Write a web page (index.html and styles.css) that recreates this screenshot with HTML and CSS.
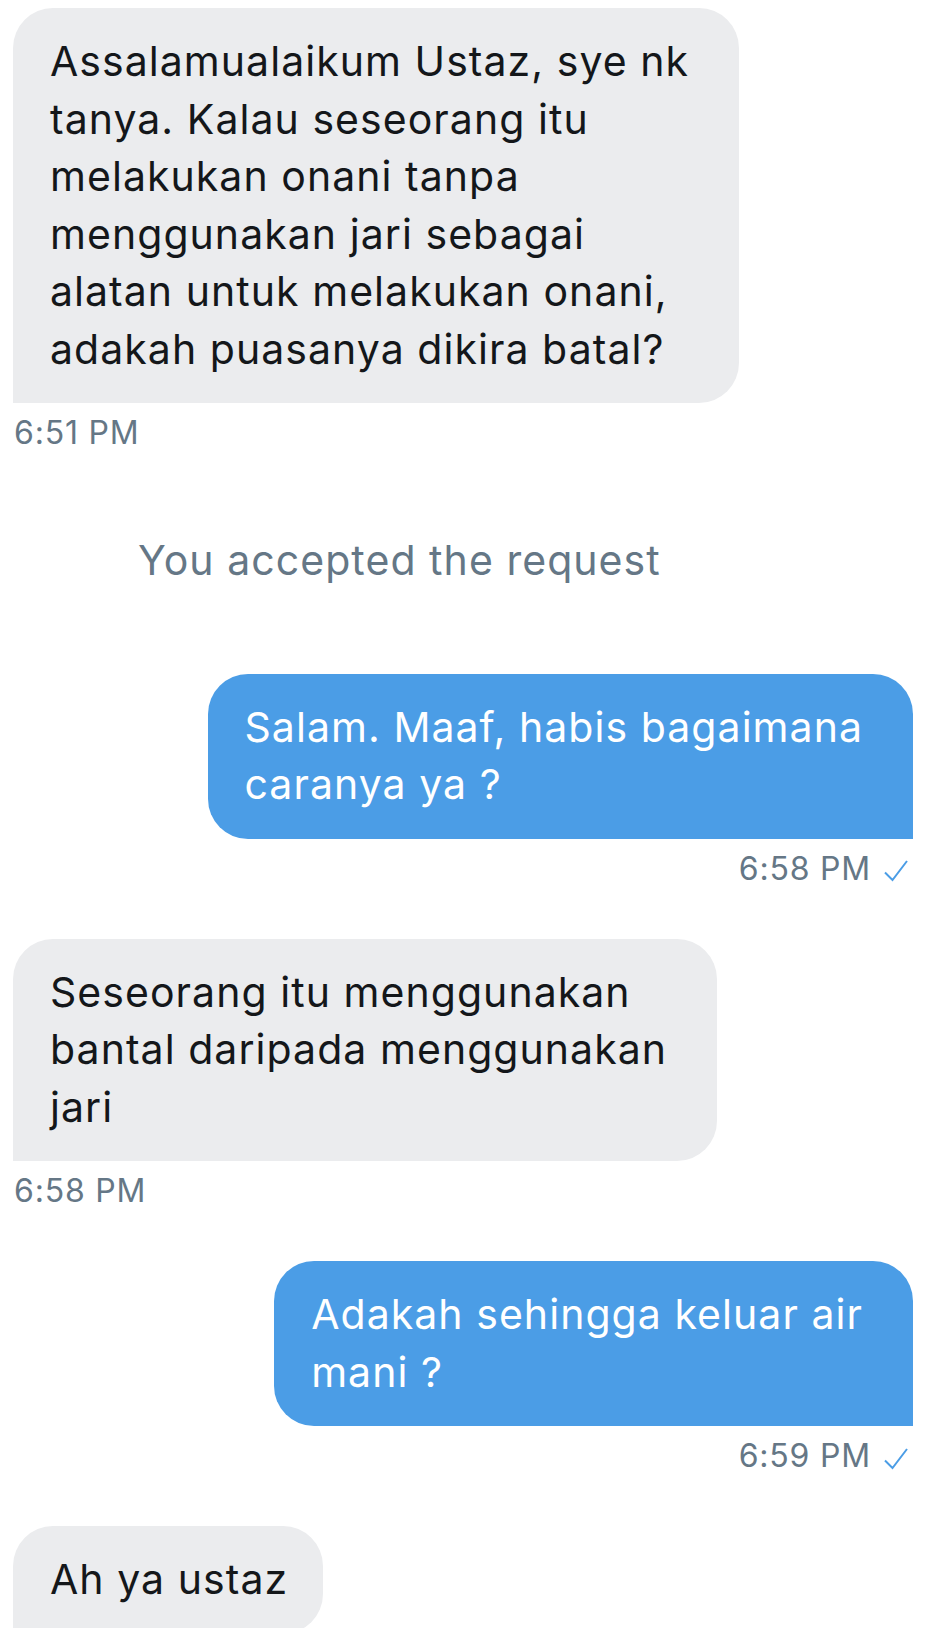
FILE: index.html
```html
<!DOCTYPE html>
<html lang="ms">
<head>
  <meta charset="UTF-8">
  <meta name="viewport" content="width=device-width, initial-scale=1.0">
  <title>Messages</title>
  <link rel="stylesheet" href="styles.css">
</head>
<body>

<div class="thread">
  <!-- Incoming -->
  <div class="msg msg-in">
    <div class="bubble">Assalamualaikum Ustaz, sye nk<br>tanya. Kalau seseorang itu<br>melakukan onani tanpa<br>menggunakan jari sebagai<br>alatan untuk melakukan onani,<br>adakah puasanya dikira batal?</div>
    <div class="time">6:51 PM</div>
  </div>

  <p class="notice">You accepted the request</p>

  <!-- Outgoing -->
  <div class="msg msg-out">
    <div class="bubble">Salam. Maaf, habis bagaimana<br>caranya ya ?</div>
    <div class="time">6:58 PM
      <svg class="check" width="24" height="22" viewBox="0 0 24 22"><polyline points="1,12.5 8.5,20 23,1" /></svg>
    </div>
  </div>

  <div class="msg msg-in">
    <div class="bubble">Seseorang itu menggunakan<br>bantal daripada menggunakan<br>jari</div>
    <div class="time">6:58 PM</div>
  </div>

  <div class="msg msg-out">
    <div class="bubble">Adakah sehingga keluar air<br>mani ?</div>
    <div class="time">6:59 PM
      <svg class="check" width="24" height="22" viewBox="0 0 24 22"><polyline points="1,12.5 8.5,20 23,1" /></svg>
    </div>
  </div>

  <div class="msg msg-in">
    <div class="bubble short">Ah ya ustaz</div>
  </div>
</div>

</body>
</html>
```

FILE: styles.css
```css
/* General Styling */
body {
  margin: 0;
  background: #fff;
  font-family: 'Inter', 'Noto Sans', sans-serif;
  color: #14171a;
}

.thread {
  display: flex;
  flex-direction: column;
  gap: 50px;
  padding: 8px 12px 0 13px;
}

.msg {
  display: flex;
  flex-direction: column;
  align-items: flex-start;
}

.msg-out {
  align-items: flex-end;
}

/* Bubbles */
.bubble {
  font-size: 41px;
  line-height: 57.5px;
  letter-spacing: 1.05px;
  padding: 25px 50px 25px 37px;
  border-radius: 40px;
}

.bubble.short {
  padding-right: 35px;
}

.msg-in .bubble {
  background: #ebecee;
  color: #14171a;
  border-bottom-left-radius: 0;
}

.msg-out .bubble {
  background: #4b9de6;
  color: #fff;
  border-bottom-right-radius: 0;
}

/* Timestamps */
.time {
  display: flex;
  align-items: center;
  gap: 13px;
  margin-top: 10px;
  font-size: 32px;
  line-height: 40px;
  letter-spacing: 0.8px;
  color: #657786;
}

.msg-in .time {
  padding-left: 1px;
}

.msg-out .time {
  padding-right: 5px;
}

.check {
  margin-top: 5px;
}

.check polyline {
  fill: none;
  stroke: #4b9de6;
  stroke-width: 2;
}

/* System notice */
.notice {
  margin: 29px 0 34px;
  padding-left: 125px;
  font-size: 41px;
  line-height: 57.5px;
  letter-spacing: 1.05px;
  color: #657786;
}
```
